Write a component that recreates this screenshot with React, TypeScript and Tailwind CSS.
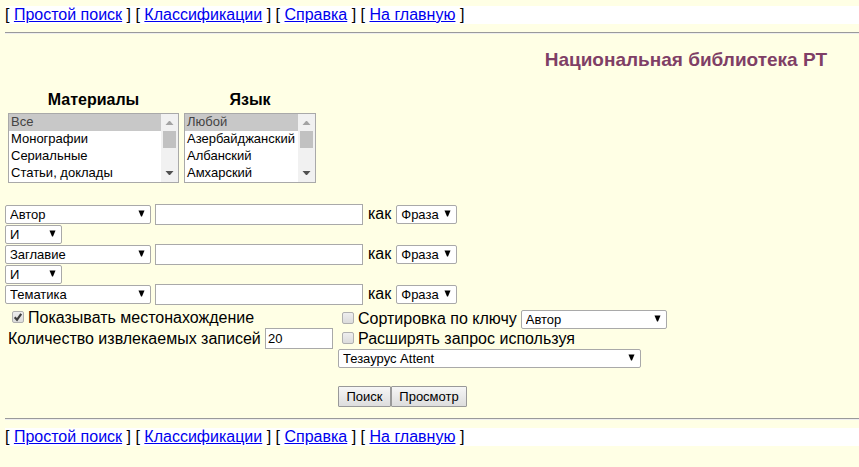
import { Fragment } from 'react'

const links = ['Простой поиск', 'Классификации', 'Справка', 'На главную']
const fields = ['Автор', 'Заглавие', 'Тематика']

function NavBar() {
  return (
    <nav className="h-[18px] bg-white leading-[18px] whitespace-pre">
      {links.map((link) => (
        <Fragment key={link}>
          {'[ '}
          <a href="#" className="text-[#0000ee] underline">
            {link}
          </a>
          {' ] '}
        </Fragment>
      ))}
    </nav>
  )
}

function Rule() {
  return <hr className="h-0.5 border-t border-b border-t-[#9a9a9a] border-b-[#eeeeee]" />
}

function Select({ label, options, value, className }: {
  label: string
  options: string[]
  value: string
  className: string
}) {
  return (
    <span className={`relative block h-[19px] shrink-0 ${className}`}>
      <select
        aria-label={label}
        defaultValue={value}
        className="block h-full w-full appearance-none rounded-xs border border-[#a9a9a9] bg-white pt-px pl-1 text-[13px] leading-4 text-black"
      >
        {options.map((option) => (
          <option key={option}>{option}</option>
        ))}
      </select>
      <svg viewBox="0 0 7 7" className="pointer-events-none absolute top-[5px] right-1.5 h-[7px] w-[7px]">
        <path d="M0.5 0.5h6L4 6.5H3z" fill="#000" />
      </svg>
    </span>
  )
}

function ListBox({ id, label, options, className }: {
  id: string
  label: string
  options: string[]
  className: string
}) {
  return (
    <div className={className}>
      <label htmlFor={id} className="block pb-1 text-center leading-[18px] font-bold">
        {label}
      </label>
      <div className="relative">
        <select
          id={id}
          size={4}
          defaultValue={options[0]}
          className="block h-[70px] w-full overflow-hidden border border-[#a9a9a9] bg-white text-[13px] leading-4 text-black"
        >
          {options.map((option) => (
            <option
              key={option}
              className="h-[17px] min-h-0 px-0.5 py-0 checked:bg-[linear-gradient(#c8c8c8,#c8c8c8)] checked:text-[#444444]"
            >
              {option}
            </option>
          ))}
        </select>
        <svg viewBox="0 0 17 68" className="pointer-events-none absolute top-px right-px h-[68px] w-[17px]">
          <path d="M0 0h17v68H0z" fill="#f1f1f1" />
          <path d="M4.5 11h8L9 7H8z" fill="#a3a3a3" />
          <path d="M2 17h13v17H2z" fill="#c1c1c1" />
          <path d="M4.5 57h8L9 61H8z" fill="#505050" />
        </svg>
      </div>
    </div>
  )
}

function Checkbox({ label, checked = false }: { label: string; checked?: boolean }) {
  return (
    <label className="flex items-center gap-[3px] pl-1 leading-5 whitespace-nowrap">
      <span className="relative block h-[15px] w-[13px]">
        <input
          type="checkbox"
          defaultChecked={checked}
          className="peer block h-3 w-3 appearance-none rounded-xs border border-[#b0b0b0] bg-linear-to-b from-[#eeeeee] to-[#dcdcdc]"
        />
        <svg
          viewBox="0 0 12 12"
          className="pointer-events-none absolute top-0 left-0 hidden h-3 w-3 peer-checked:block"
        >
          <path d="M2.7 6.2l2.3 2.6 4.2-6" fill="none" stroke="#3f3f3f" strokeWidth="2.2" />
        </svg>
      </span>
      {label}
    </label>
  )
}

function Button({ children, className }: { children: string; className: string }) {
  return (
    <button
      type="button"
      className={`h-[21px] rounded-[1px] border border-[#999999] bg-linear-to-b from-[#f6f6f6] to-[#dddddd] text-[13px] leading-[18px] text-black ${className}`}
    >
      {children}
    </button>
  )
}

export default function App() {
  return (
    <div className="min-h-screen bg-[#ffffe5] pt-1.5 pl-[5px] font-['Liberation_Sans',Arial,sans-serif] text-base text-black">
      <NavBar />
      <div className="pt-2">
        <Rule />
      </div>
      <h1 className="pt-3.5 pr-8 text-right text-[19px] leading-6 font-bold text-[#7f3f66]">
        Национальная библиотека РТ
      </h1>

      <form>
        <div className="flex gap-[5px] px-[3px] pt-[19px] pb-[21px]">
          <ListBox
            id="materials"
            label="Материалы"
            options={['Все', 'Монографии', 'Сериальные', 'Статьи, доклады']}
            className="w-[171px]"
          />
          <ListBox
            id="language"
            label="Язык"
            options={['Любой', 'Азербайджанский', 'Албанский', 'Амхарский']}
            className="w-[132px]"
          />
        </div>

        {fields.map((field, i) => (
          <Fragment key={field}>
            {i > 0 && (
              <div className="flex h-5 items-center">
                <Select label="Оператор" options={['И', 'ИЛИ', 'НЕ']} value="И" className="w-[57px]" />
              </div>
            )}
            <div className="flex h-5 items-center">
              <Select label="Поле" options={fields} value={field} className="w-[146px]" />
              <input
                type="text"
                aria-label={field}
                className="ml-1 h-[21px] w-[208px] border border-[#a9a9a9] bg-white px-0.5 text-[13px]"
              />
              <span className="px-[5px] leading-[18px]">как</span>
              <Select label="Тип поиска" options={['Фраза', 'Слова']} value="Фраза" className="w-[61px]" />
            </div>
          </Fragment>
        ))}

        <div className="flex gap-[5px] px-[3px] pt-1">
          <div className="w-[325px] shrink-0">
            <Checkbox label="Показывать местонахождение" checked />
            <div className="flex items-center justify-between">
              <label htmlFor="count" className="leading-[18px] whitespace-nowrap">
                Количество извлекаемых записей
              </label>
              <input
                id="count"
                type="text"
                defaultValue="20"
                className="h-[21px] w-[68px] border border-[#a9a9a9] bg-white px-0.5 text-[13px]"
              />
            </div>
          </div>
          <div className="pt-px">
            <div className="flex h-5 items-center gap-1">
              <Checkbox label="Сортировка по ключу" />
              <Select label="Ключ сортировки" options={fields} value="Автор" className="w-[146px]" />
            </div>
            <Checkbox label="Расширять запрос используя" />
            <Select label="Тезаурус" options={['Тезаурус Attent']} value="Тезаурус Attent" className="w-[303px]" />
            <div className="flex pt-[18px]">
              <Button className="w-[53px]">Поиск</Button>
              <Button className="w-[76px]">Просмотр</Button>
            </div>
          </div>
        </div>
      </form>

      <div className="pt-[11px] pb-2">
        <Rule />
      </div>
      <NavBar />
    </div>
  )
}
